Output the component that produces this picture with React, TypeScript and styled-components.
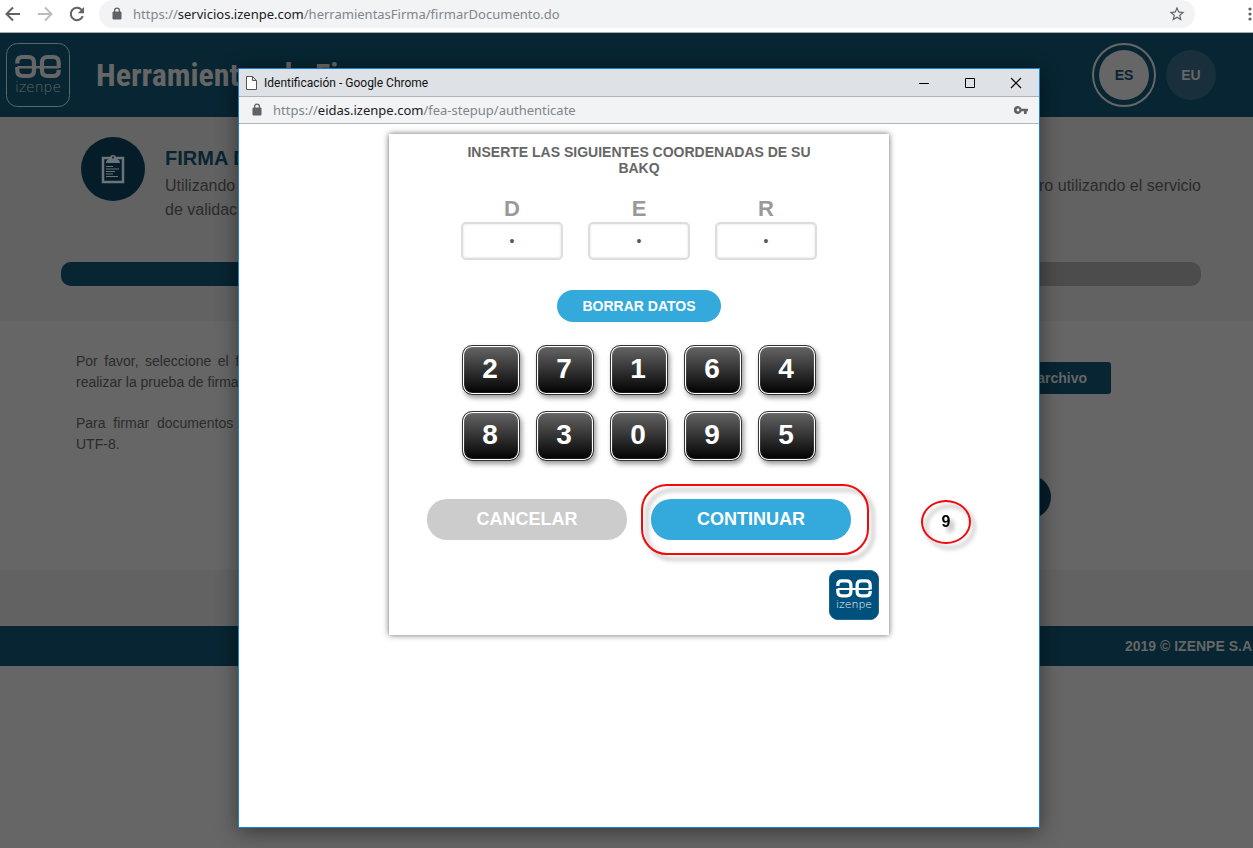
import React from "react";
import styled, { createGlobalStyle } from "styled-components";

const Global = createGlobalStyle`
  *, *::before, *::after { box-sizing: border-box; }
  body { margin: 0; background: #666; font-family: "Liberation Sans", Arial, sans-serif; overflow-x: hidden; }
  button, input { font-family: inherit; }
  h1, h2, h3, p { margin: 0; }
`;

const NAVY = "#072532";
const BLUE = "#34aadc";

const Screen = styled.div`
  position: relative;
  min-height: 100vh;
  display: flex;
  flex-direction: column;
`;

/* ---------- main browser toolbar ---------- */
const Toolbar = styled.div`
  display: flex;
  align-items: flex-start;
  height: 33px;
  padding-left: 4px;
  background: #fff;
  border-bottom: 1px solid #aca9ab;
  overflow: hidden;
`;
const IconButton = styled.button<{ $w: number }>`
  width: ${(p) => p.$w}px;
  height: 28px;
  padding: 0;
  border: 0;
  background: none;
  display: flex;
  flex: none;
  align-items: center;
  justify-content: flex-start;
`;
const Omnibox = styled.div`
  flex: 1;
  display: flex;
  align-items: center;
  height: 28px;
  padding: 0 9px 0 12px;
  border-radius: 14px;
  background: #f1f3f4;
`;
const Address = styled.div`
  flex: 1;
  margin-left: 10px;
  font: 13px/20px "Noto Sans", "Open Sans", sans-serif;
  color: #80868b;
  white-space: nowrap;
  b { font-weight: 400; color: #202124; }
`;

/* ---------- dimmed page ---------- */
const Header = styled.header`
  display: flex;
  align-items: center;
  height: 84px;
  padding: 0 37px 0 6px;
  background: ${NAVY};
`;
const SiteTitle = styled.h1`
  flex: 1;
  margin-left: 26px;
  font: bold 32px/40px "Liberation Sans Narrow", "Roboto Condensed", sans-serif;
  color: #666;
  white-space: nowrap;
`;
const Language = styled.a<{ $active?: boolean }>`
  display: flex;
  align-items: center;
  justify-content: center;
  width: 50px;
  height: 50px;
  border-radius: 50%;
  font-size: 14px;
  font-weight: bold;
  text-decoration: none;
  color: ${(p) => (p.$active ? NAVY : "#666")};
  background: ${(p) => (p.$active ? "#666" : "#19303c")};
`;
const Ring = styled.div`
  padding: 5px;
  margin-right: 10px;
  border: 2px solid #666;
  border-radius: 50%;
`;
const Intro = styled.section`
  height: 204px;
  padding: 20px 52px 0 61px;
  background: #626262;
`;
const IntroRow = styled.div`
  display: flex;
  gap: 20px;
  padding-left: 20px;
`;
const Disc = styled.div`
  display: flex;
  align-items: center;
  justify-content: center;
  flex: none;
  width: 64px;
  height: 64px;
  border-radius: 50%;
  background: #051d29;
`;
const IntroText = styled.div`
  flex: 1;
  padding-top: 6px;
  height: 105px;
  h2 { margin-bottom: 1px; font-size: 20px; line-height: 30px; color: ${NAVY}; }
  p { font-size: 16px; line-height: 24px; color: #2b2b2b; text-align: justify; }
`;
const Progress = styled.div`
  height: 24px;
  margin-top: 20px;
  border-radius: 10px;
  overflow: hidden;
  background: #4c4c4c;
`;
const ProgressDone = styled.div`
  width: 50%;
  height: 100%;
  background: ${NAVY};
`;
const Work = styled.section`
  display: flex;
  justify-content: space-between;
  height: 249px;
  padding: 30px 142px 0 76px;
`;
const Help = styled.div`
  width: 500px;
  font-size: 14px;
  line-height: 21px;
  color: #2b2b2b;
  text-align: justify;
  p + p { margin-top: 20px; }
`;
const NoBreak = styled.span`
  white-space: nowrap;
`;
const Actions = styled.div`
  display: flex;
  flex-direction: column;
  align-items: flex-end;
  padding-top: 11px;
`;
const FileButton = styled.button`
  height: 32px;
  padding: 0 24px;
  border: 0;
  border-radius: 3px;
  background: ${NAVY};
  color: #666;
  font-size: 14px;
  font-weight: bold;
`;
const SignButton = styled.button`
  width: 160px;
  height: 44px;
  margin: 81px 60px 0 0;
  border: 0;
  border-radius: 22px;
  background: #051d29;
  color: #666;
  font-size: 16px;
  font-weight: bold;
`;
const Band = styled.div`
  height: 56px;
  background: #626262;
`;
const Footer = styled.footer`
  height: 40px;
  padding-right: 1px;
  background: ${NAVY};
  color: #666;
  font-size: 14px;
  font-weight: bold;
  line-height: 40px;
  text-align: right;
`;

/* ---------- pop-up window ---------- */
const Popup = styled.div`
  position: absolute;
  top: 68px;
  left: 238px;
  width: 802px;
  height: 760px;
  display: flex;
  flex-direction: column;
  border: 1px solid #1a80d6;
  background: #fff;
  box-shadow: 0 4px 20px rgba(0, 0, 0, 0.45);
`;
const TitleBar = styled.div`
  display: flex;
  align-items: center;
  height: 28px;
  padding: 0 17px 0 7px;
  background: #dee1e6;
  border-bottom: 1px solid #b1b1b3;
`;
const WindowTitle = styled.div`
  flex: 1;
  margin-left: 7px;
  font: 12px/20px Roboto, "Open Sans", sans-serif;
  color: #111;
`;
const WindowButtons = styled.div`
  display: flex;
  gap: 34px;
`;
const WindowButton = styled.button`
  width: 12px;
  height: 12px;
  padding: 0;
  border: 0;
  background: none;
  display: flex;
`;
const PopupAddress = styled.div`
  display: flex;
  align-items: center;
  height: 27px;
  padding: 0 11px 0 12px;
  background: #f1f3f4;
  border-bottom: 1px solid #b1b4b6;
`;
const PopupBody = styled.main`
  padding: 10px 0 0 150px;
`;
const Card = styled.form`
  display: flex;
  flex-direction: column;
  align-items: center;
  width: 500px;
  height: 501px;
  padding: 10px 10px 15px;
  background: #fff;
  box-shadow: 0 0 6px rgba(0, 0, 0, 0.6);
`;
const Prompt = styled.h3`
  width: 360px;
  font-size: 14px;
  line-height: 16px;
  color: #666;
  text-align: center;
`;
const Fields = styled.div`
  display: flex;
  gap: 25px;
  margin-top: 20px;
`;
const Field = styled.label`
  display: flex;
  flex-direction: column;
  align-items: center;
  font-size: 22px;
  line-height: 26px;
  font-weight: bold;
  color: #999;
`;
const Digit = styled.input`
  width: 102px;
  height: 38px;
  padding: 0;
  border: 2px solid #ddd;
  border-radius: 5px;
  background: #fff;
  box-shadow: inset 0 0 3px rgba(0, 0, 0, 0.12);
  color: #555;
  font-size: 14px;
  text-align: center;
`;
const Pill = styled.button<{ $w: number; $h: number; $grey?: boolean }>`
  width: ${(p) => p.$w}px;
  height: ${(p) => p.$h}px;
  padding: 0;
  border: 0;
  border-radius: 20px;
  background: ${(p) => (p.$grey ? "#ccc" : BLUE)};
  color: #fff;
  font-size: ${(p) => (p.$h > 36 ? 18 : 14)}px;
  font-weight: bold;
`;
const Clear = styled.div`
  margin-top: 30px;
  height: 32px;
`;
const Keypad = styled.div`
  display: grid;
  grid-template-columns: repeat(5, 58px);
  gap: 16px;
  margin-top: 23px;
`;
const Key = styled.button`
  height: 50px;
  padding: 0 2px 2px 0;
  border: 1px solid #333;
  border-radius: 10px;
  background: linear-gradient(#666, #000);
  box-shadow: inset 0 0 0 1px #fff, inset 0 0 1px 1px #ddd, 2px 3px 5px rgba(0, 0, 0, 0.4);
  color: #fff;
  font-size: 28px;
  font-weight: bold;
`;
const Decisions = styled.div`
  display: flex;
  gap: 24px;
  margin-top: 38px;
`;
const Highlighted = styled.div`
  position: relative;
  &::after {
    content: "";
    position: absolute;
    inset: -15px -18px -15px -10px;
    border: 2px solid #f00a0a;
    border-radius: 26px;
    filter: drop-shadow(5px 5px 2px rgba(0, 0, 0, 0.35));
    pointer-events: none;
  }
`;
const Brand = styled.div`
  align-self: flex-end;
  margin-top: auto;
  height: 50px;
`;
const StepMark = styled.div`
  position: absolute;
  top: 431px;
  left: 682px;
  display: flex;
  align-items: center;
  justify-content: center;
  width: 50px;
  height: 44px;
  border: 2px solid #f00a0a;
  border-radius: 50%;
  font-size: 16px;
  font-weight: bold;
  color: #000;
  filter: drop-shadow(4px 5px 2px rgba(0, 0, 0, 0.35));
`;

const Lock = () => (
  <svg width="12" height="14" viewBox="0 0 12 14" aria-hidden="true">
    <path d="M2 5h8v7H2z" fill="#5f6368" stroke="#5f6368" strokeWidth="1" strokeLinejoin="round" />
    <path d="M3.6 5V3.6a2.4 2.4 0 0 1 4.8 0V5" fill="none" stroke="#5f6368" strokeWidth="1.3" />
  </svg>
);

const Logo = ({ size, color, fill, edge }: { size: number; color: string; fill: string; edge: string }) => (
  <svg width={size} height={size} viewBox="0 0 64 64" role="img" aria-label="izenpe">
    <rect x="0.5" y="0.5" width="63" height="63" rx="11" fill={fill} stroke={edge} />
    <g fill="none" stroke={color} strokeWidth="4.2">
      <path d="M11.300 20.500V19Q11.300 14 16.500 14H22.500Q28 14 28 19.500V27.500Q28 33 22.500 33H16.800Q11.300 33 11.300 27.500V24" />
      <path d="M52.700 26.800V28Q52.700 33 47.500 33H41.500Q36 33 36 27.500V19.500Q36 14 41.500 14H47.200Q52.700 14 52.700 19.500V25" />
      <path d="M11.300 24.300H52.700" strokeWidth="2.600" />
    </g>
    <text x="32" y="49" textAnchor="middle" fill={color} fontFamily="DejaVu Sans" fontWeight="200" fontSize="14">izenpe</text>
  </svg>
);

export default function App() {
  return (
    <Screen>
      <Global />
      <Toolbar>
        <IconButton $w={32} aria-label="Atrás">
          <svg width="18" height="16" viewBox="0 0 18 16" fill="none" stroke="#5f6368" strokeWidth="2"><path d="M16 8H3M9 1.5 2.500 8 9 14.500" /></svg>
        </IconButton>
        <IconButton $w={32} aria-label="Adelante">
          <svg width="18" height="16" viewBox="0 0 18 16" fill="none" stroke="#babcbe" strokeWidth="2"><path d="M2 8h13M9 1.500 15.500 8 9 14.500" /></svg>
        </IconButton>
        <IconButton $w={31} aria-label="Volver a cargar">
          <svg width="18" height="18" viewBox="0 0 18 18"><path d="M14.800 11.200A6.200 6.200 0 1 1 13.500 4.700" fill="none" stroke="#5f6368" strokeWidth="2" /><path d="M16 2v6.200H9.800z" fill="#5f6368" /></svg>
        </IconButton>
        <Omnibox>
          <Lock />
          <Address>https://<b>servicios.izenpe.com</b>/herramientasFirma/firmarDocumento.do</Address>
          <svg width="18" height="18" viewBox="0 0 24 24" fill="#5f6368" aria-hidden="true"><path d="M22 9.240l-7.190-.62L12 2 9.190 8.630 2 9.240l5.460 4.730L5.820 21 12 17.270 18.180 21l-1.630-7.030L22 9.240zM12 15.400l-3.760 2.270 1-4.280-3.320-2.880 4.380-.38L12 6.100l1.710 4.040 4.380.38-3.320 2.880 1 4.280L12 15.400z" /></svg>
        </Omnibox>
        <IconButton $w={58} aria-label="Menú">
          <svg width="58" height="16" viewBox="0 0 58 16" fill="#5f6368"><circle cx="55" cy="3" r="1.600" /><circle cx="55" cy="8" r="1.600" /><circle cx="55" cy="13" r="1.600" /></svg>
        </IconButton>
      </Toolbar>

      <Header>
        <Logo size={64} color="#666" fill="none" edge="#5a666c" />
        <SiteTitle>Herramientas de Firma</SiteTitle>
        <Ring><Language href="#es" $active>ES</Language></Ring>
        <Language href="#eu">EU</Language>
      </Header>

      <Intro>
        <IntroRow>
          <Disc>
            <svg width="24" height="30" viewBox="0 0 24 30" aria-hidden="true">
              <path d="M2 4h20v24H2z" fill="none" stroke="#6b7478" strokeWidth="2.500" />
              <path d="M5 9c0-3 3-4 4-5a3 3 0 0 1 6 0c1 1 4 2 4 5z" fill="#6b7478" />
              <circle cx="12" cy="3.500" r="1" fill="#051d29" />
              <path d="M5 12.500h7M5 15h13M5 17.500h9M5 20h7M5 22.500h12" stroke="#6b7478" strokeWidth="1.200" />
            </svg>
          </Disc>
          <IntroText>
            <h2>FIRMA DE DOCUMENTO</h2>
            <p>Utilizando esta herramienta podrá firmar cualquier documento con su certificado digital y comprobar posteriormente el fichero utilizando el servicio <NoBreak>de validación</NoBreak> de Izenpe.</p>
          </IntroText>
        </IntroRow>
        <Progress><ProgressDone /></Progress>
      </Intro>

      <Work>
        <Help>
          <p>Por favor, seleccione el fichero que desea firmar de su equipo con el fin de realizar la prueba de firma.</p>
          <p>Para firmar documentos XML es necesario que estos estén codificados en <NoBreak>UTF-8.</NoBreak></p>
        </Help>
        <Actions>
          <FileButton>Seleccionar archivo</FileButton>
          <SignButton>Firmar</SignButton>
        </Actions>
      </Work>
      <Band />
      <Footer>2019 © IZENPE S.A</Footer>

      <Popup>
        <TitleBar>
          <svg width="11" height="14" viewBox="0 0 11 14" fill="#fff" stroke="#555" aria-hidden="true"><path d="M.5.500h6l4 4v9H.500zM6.500.500v4h4" /></svg>
          <WindowTitle>Identificación - Google Chrome</WindowTitle>
          <WindowButtons>
            <WindowButton aria-label="Minimizar"><svg width="12" height="12"><path d="M1 6.500h10" stroke="#000" /></svg></WindowButton>
            <WindowButton aria-label="Maximizar"><svg width="12" height="12"><path d="M1.500 1.500h9v9h-9z" fill="none" stroke="#000" /></svg></WindowButton>
            <WindowButton aria-label="Cerrar"><svg width="12" height="12"><path d="M1 1l10 10M11 1 1 11" stroke="#000" strokeWidth="1.200" /></svg></WindowButton>
          </WindowButtons>
        </TitleBar>
        <PopupAddress>
          <Lock />
          <Address>https://<b>eidas.izenpe.com</b>/fea-stepup/authenticate</Address>
          <svg width="14" height="8" viewBox="0 0 14 8" aria-hidden="true"><path fillRule="evenodd" d="M7.500 2.700A4 4 0 1 0 7.500 5.300H10V8h2.700V5.300H14V2.700zM4 2.600a1.400 1.400 0 1 1 0 2.800 1.400 1.400 0 0 1 0-2.800z" fill="#5f6368" /></svg>
        </PopupAddress>
        <PopupBody>
          <Card onSubmit={(e) => e.preventDefault()}>
            <Prompt>INSERTE LAS SIGUIENTES COORDENADAS DE SU BAKQ</Prompt>
            <Fields>
              {["D", "E", "R"].map((name) => (
                <Field key={name}>{name}<Digit type="text" maxLength={1} defaultValue="•" /></Field>
              ))}
            </Fields>
            <Clear><Pill type="button" $w={164} $h={32}>BORRAR DATOS</Pill></Clear>
            <Keypad>
              {[2, 7, 1, 6, 4, 8, 3, 0, 9, 5].map((n) => <Key type="button" key={n}>{n}</Key>)}
            </Keypad>
            <Decisions>
              <Pill type="button" $w={200} $h={41} $grey>CANCELAR</Pill>
              <Highlighted><Pill type="submit" $w={200} $h={41}>CONTINUAR</Pill></Highlighted>
            </Decisions>
            <Brand><Logo size={50} color="#fff" fill="#00507d" edge="#00507d" /></Brand>
          </Card>
        </PopupBody>
        <StepMark>9</StepMark>
      </Popup>
    </Screen>
  );
}
